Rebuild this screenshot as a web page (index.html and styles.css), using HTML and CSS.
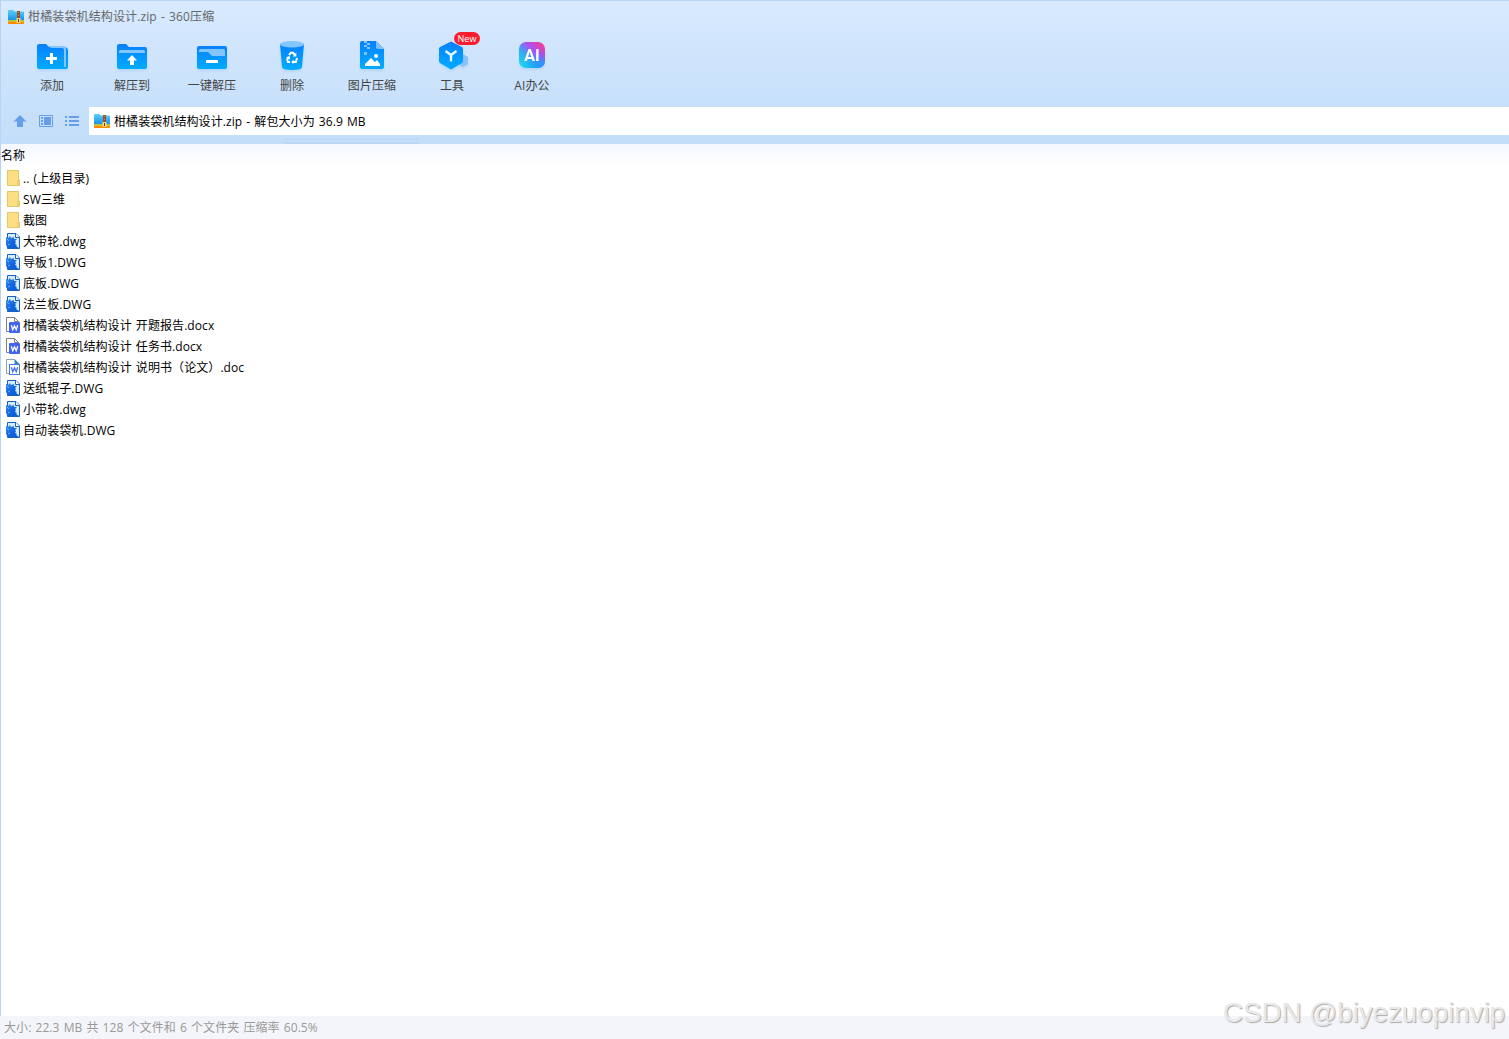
FILE: index.html
```html
<!DOCTYPE html>
<html lang="zh-CN">
<head>
  <meta charset="UTF-8" />
  <title>柑橘装袋机结构设计.zip - 360压缩</title>
  <link rel="stylesheet" href="styles.css">
</head>
<body>

  <svg class="defs" width="0" height="0">
    <defs>
      <linearGradient id="blue" x1="0" y1="0" x2="0" y2="1">
        <stop offset="0" stop-color="#0880ff"/>
        <stop offset="1" stop-color="#00acff"/>
      </linearGradient>
      <linearGradient id="dwg-blue" x1="0" y1="0" x2="1" y2="1">
        <stop offset="0" stop-color="#3d92ea"/>
        <stop offset="0.5" stop-color="#1266df"/>
        <stop offset="1" stop-color="#075cd4"/>
      </linearGradient>
      <linearGradient id="zip-blue" x1="0" y1="0" x2="0" y2="1">
        <stop offset="0" stop-color="#58d0fb"/>
        <stop offset="1" stop-color="#188ce9"/>
      </linearGradient>
      <linearGradient id="ai-bg" x1="0" y1="1" x2="1" y2="0">
        <stop offset="0" stop-color="#12e4e7"/>
        <stop offset="0.35" stop-color="#2fb1f2"/>
        <stop offset="0.65" stop-color="#b44cee"/>
        <stop offset="1" stop-color="#ff3c80"/>
      </linearGradient>
      <radialGradient id="ai-glow" cx="0.85" cy="1" r="0.65">
        <stop offset="0" stop-color="#159bff"/>
        <stop offset="1" stop-color="#159bff" stop-opacity="0"/>
      </radialGradient>
    </defs>
    <symbol id="zip" viewBox="0 0 16 14">
      <path d="M0 1.2Q0 0 1 0H5L7 1.5H15Q16 1.5 16 2.5V11H0Z" fill="url(#zip-blue)"/>
      <path d="M0 10H16V11.5H0Z" fill="#a3cd2b"/>
      <path d="M0 11.5H16V13Q16 14 15 14H1Q0 14 0 13Z" fill="#ff8a00"/>
      <path d="M9 1H12V9H9Z" fill="#a04d20"/>
      <path d="M10 2H11V3H10ZM10 5H11V6H10Z" fill="#c98a52"/>
      <rect x="8.5" y="8" width="4" height="5" fill="#ffd777"/>
      <path d="M10 9H11V12H10Z" fill="#733810"/>
    </symbol>
    <symbol id="folder" viewBox="0 0 14 16">
      <path d="M1.5.5H12.5V10H13.5V15.5H1.5Z" fill="#fbdf83" stroke="#e5c567"/>
      <path d="M12 10V15" stroke="#e5c567"/>
    </symbol>
    <symbol id="dwg" viewBox="0 0 14 16">
      <path d="M1.5.5H10L13.5 4V15.5H1.5Z" fill="#d6ebff" stroke="#1560c0"/>
      <path d="M9.5.5V4.5H13.5" fill="#fff" stroke="#1560c0"/>
      <path d="M0 4 2 5 4 3 5 5 8 4 8 6 11 6 9 8 10 9 9 11 11 12 10 13 13 15H2L0 12Z" fill="url(#dwg-blue)"/>
      <path d="M1 6 3 8M2 12 4 11" stroke="#68b3fa" fill="none"/>
    </symbol>
    <symbol id="docx" viewBox="0 0 14 16">
      <path d="M3 14.5H.5V.5H8.5L12.5 4.5V6M8.5.5V4.5H12.5" fill="#fff" stroke="#7c7f87"/>
      <rect x="3" y="5" width="11" height="11" rx="1" fill="#4066f1"/>
      <path d="M5.3 8.2 6.8 12.7 8.5 8.8 10.2 12.7 11.7 8.2" fill="none" stroke="#fff" stroke-width="1.3"/>
    </symbol>
    <symbol id="doc" viewBox="0 0 14 16">
      <path d="M3 14.5H.5V.5H8.5L12.5 4.5V6" fill="#fff" stroke="#8da4bf"/>
      <path d="M8.5 0 13.5 5H8.5Z" fill="#3586c8"/>
      <rect x="3.5" y="5.5" width="10" height="10" fill="#fff" stroke="#4778ed"/>
      <path d="M5.3 8.2 6.8 12.7 8.5 8.8 10.2 12.7 11.7 8.2" fill="none" stroke="#416fed" stroke-width="1.3"/>
    </symbol>
  </svg>

  <div class="window">
    <div class="header">
      <div class="title-bar">
        <svg class="zip-icon"><use href="#zip"/></svg>
        <span class="title">柑橘装袋机结构设计.zip - 360压缩</span>
      </div>

      <div class="toolbar">
        <div class="tool">
          <svg viewBox="0 0 36 36">
            <path d="M3 8Q3 6 5 6H12L15 9H30Q34 9 34 13V29Q34 31 32 31H5Q3 31 3 29Z" fill="url(#blue)"/>
            <path d="M15 8H29Q32 8 32 11V29H30V12Q30 10 28 10H17Z" fill="#86c5ff"/>
            <path d="M17.5 15V26M12 20.5H23" stroke="#fff" stroke-width="3"/>
          </svg>
          <span>添加</span>
        </div>
        <div class="tool">
          <svg viewBox="0 0 36 36">
            <path d="M3 8Q3 6 5 6H12L15 9H31Q33 9 33 11V29Q33 31 31 31H5Q3 31 3 29Z" fill="url(#blue)"/>
            <path d="M5 15V13.5Q5 12 6.5 12H29.5Q31 12 31 13.5V15Z" fill="#82c5ff"/>
            <path d="M18 17 23 22.5H20V27H16V22.5H13Z" fill="#fff"/>
          </svg>
          <span>解压到</span>
        </div>
        <div class="tool">
          <svg viewBox="0 0 36 36">
            <rect x="3" y="8" width="30" height="23" rx="2" fill="url(#blue)"/>
            <path d="M5 14V12.5Q5 11 6.5 11H29.5Q31 11 31 12.5V18H18L14 14Z" fill="#82c5ff"/>
            <rect x="12" y="22" width="12" height="3" rx=".5" fill="#fff"/>
          </svg>
          <span>一键解压</span>
        </div>
        <div class="tool">
          <svg viewBox="0 0 36 36">
            <path d="M6 6 8 29Q8 32 18 32T28 29L30 6Z" fill="url(#blue)"/>
            <ellipse cx="18" cy="6.2" rx="12" ry="3.2" fill="#84c6ff"/>
            <g fill="none" stroke="#fff" stroke-width="2">
              <path d="M15 17 17 14.8H19L21 17M23 20 22 24H19M16 24H14L13.2 21.5 14.5 19.5"/>
            </g>
            <path d="M22.3 14.5V18.5H18.8ZM19.5 21.8V26.2L17.2 24ZM12 19.3 15.6 18 16.2 21.5Z" fill="#fff"/>
          </svg>
          <span>删除</span>
        </div>
        <div class="tool">
          <svg viewBox="0 0 36 36">
            <path d="M6 5Q6 3 8 3H22L30 11V29Q30 31 28 31H8Q6 31 6 29Z" fill="url(#blue)"/>
            <path d="M22 3 30 11H24Q22 11 22 9Z" fill="#83c4ff"/>
            <path d="M10 3H13V5H10ZM13 5H16V7H13ZM10 7H13V9H10ZM13 9H16V11H13ZM10 14H13V17H10Z" fill="#83c4ff"/>
            <circle cx="22" cy="18" r="2" fill="#fff"/>
            <path d="M11 28V26L17 20 21 24 23 22 26 26V28Z" fill="#fff"/>
          </svg>
          <span>图片压缩</span>
        </div>
        <div class="tool">
          <svg viewBox="0 0 36 36">
            <path d="M24 19 29 16 34 19V26L29 29 24 26Z" fill="#83c4ff"/>
            <path d="M16 4Q17 3 18 4L28 9Q29 10 29 11V23Q29 24 28 25L18 31Q17 31.5 16 31L6 25Q5 24 5 23V11Q5 10 6 9Z" fill="url(#blue)"/>
            <path d="M11.5 13 17 17 22.5 13M17 17V23.5" fill="none" stroke="#e8f8ff" stroke-width="2.4"/>
          </svg>
          <span>工具</span>
          <b class="badge">New</b>
        </div>
        <div class="tool">
          <svg viewBox="0 0 36 36">
            <rect x="5" y="4" width="26" height="26" rx="7" fill="url(#ai-bg)"/>
            <rect x="5" y="4" width="26" height="26" rx="7" fill="url(#ai-glow)"/>
            <text x="18" y="22.7" class="ai-text">AI</text>
          </svg>
          <span>AI办公</span>
        </div>
      </div>

      <div class="address-row">
        <div class="nav">
          <svg viewBox="0 0 16 16"><path d="M8 2 14.5 8.5H11V14H5V8.5H1.5Z" fill="#679eea"/></svg>
          <svg viewBox="0 0 16 16">
            <path d="M1.5 2.5H14.5V13.5H1.5Z" fill="none" stroke="#679eea"/>
            <path d="M6 4H13V12H6ZM3 4H5V6H3ZM3 7H5V9H3ZM3 10H5V12H3Z" fill="#679eea"/>
          </svg>
          <svg viewBox="0 0 16 16"><path d="M1 3H3V5H1ZM1 7H3V9H1ZM1 11H3V13H1ZM5 3H15V5H5ZM5 7H15V9H5ZM5 11H15V13H5Z" fill="#679eea"/></svg>
        </div>
        <div class="address">
          <svg class="zip-icon"><use href="#zip"/></svg>
          <span>柑橘装袋机结构设计.zip - 解包大小为 36.9 MB</span>
        </div>
      </div>
      <div class="header-lines"></div>
    </div>

    <div class="list-header">名称</div>
    <div class="file-list">
      <div class="file"><svg><use href="#folder"/></svg><span>.. (上级目录)</span></div>
      <div class="file"><svg><use href="#folder"/></svg><span>SW三维</span></div>
      <div class="file"><svg><use href="#folder"/></svg><span>截图</span></div>
      <div class="file"><svg><use href="#dwg"/></svg><span>大带轮.dwg</span></div>
      <div class="file"><svg><use href="#dwg"/></svg><span>导板1.DWG</span></div>
      <div class="file"><svg><use href="#dwg"/></svg><span>底板.DWG</span></div>
      <div class="file"><svg><use href="#dwg"/></svg><span>法兰板.DWG</span></div>
      <div class="file"><svg><use href="#docx"/></svg><span>柑橘装袋机结构设计 开题报告.docx</span></div>
      <div class="file"><svg><use href="#docx"/></svg><span>柑橘装袋机结构设计 任务书.docx</span></div>
      <div class="file"><svg><use href="#doc"/></svg><span>柑橘装袋机结构设计 说明书（论文）.doc</span></div>
      <div class="file"><svg><use href="#dwg"/></svg><span>送纸辊子.DWG</span></div>
      <div class="file"><svg><use href="#dwg"/></svg><span>小带轮.dwg</span></div>
      <div class="file"><svg><use href="#dwg"/></svg><span>自动装袋机.DWG</span></div>
    </div>
  </div>

  <div class="status-bar">大小: 22.3 MB 共 128 个文件和 6 个文件夹 压缩率 60.5%</div>
  <div class="watermark">CSDN @biyezuopinvip</div>

</body>
</html>
```
FILE: styles.css
```css
* {
  box-sizing: border-box;
}

body {
  margin: 0;
  height: 100vh;
  display: flex;
  flex-direction: column;
  position: relative;
  overflow: hidden;
  background-color: white;
  color: black;
  font-family: "Open Sans", "Noto Sans CJK SC", sans-serif;
  font-size: 12px;
  line-height: 18px;
  letter-spacing: 0.08px;
  word-spacing: 0.9px;
  white-space: nowrap;
}

svg {
  display: block;
  flex: none;
}

.defs {
  position: absolute;
}

.window {
  flex: 1;
  border-left: 1px solid #b8d4f5;
}

.header {
  height: 144px;
  border-top: 1px solid #b9d6f2;
  background: linear-gradient(#d8eaff, #cee4fc 60px, #c3def9 142px);
}

.title-bar {
  display: flex;
  align-items: center;
  height: 31px;
  padding-left: 7px;
  gap: 4px;
  color: #666;
}

.title {
  letter-spacing: 0.13px;
}

.zip-icon {
  width: 16px;
  height: 14px;
}

.toolbar {
  display: flex;
  height: 75px;
  padding: 6px 0 0 11px;
}

.tool {
  position: relative;
  width: 80px;
  display: flex;
  flex-direction: column;
  align-items: center;
  color: #444;
}

.tool svg {
  width: 36px;
  height: 36px;
  margin-bottom: 3px;
  filter: drop-shadow(0 2px 1px rgba(70, 150, 220, 0.15));
}

.badge {
  position: absolute;
  left: 42px;
  top: -6px;
  width: 26px;
  height: 13px;
  border-radius: 7px;
  background-color: #fa1d30;
  color: white;
  font-size: 9px;
  font-weight: normal;
  line-height: 13px;
  text-align: center;
}

.ai-text {
  fill: white;
  font: bold 16px Roboto, sans-serif;
  text-anchor: middle;
}

.address-row {
  display: flex;
  align-items: center;
  height: 28px;
}

.nav {
  display: flex;
  gap: 10px;
  width: 88px;
  padding-left: 11px;
}

.nav svg {
  width: 16px;
  height: 16px;
}

.address {
  flex: 1;
  display: flex;
  align-items: center;
  height: 28px;
  padding-left: 5px;
  gap: 4px;
  background-color: white;
}

.address span {
  padding-top: 2px;
}

.header-lines {
  width: 135px;
  height: 5px;
  margin: 4px 0 0 283px;
  border-top: 1px solid #b9d6f3;
  border-bottom: 2px solid #b9d6f3;
}

.list-header {
  height: 24px;
  padding-top: 3px;
  background: linear-gradient(#f3f8ff, white);
}

.file {
  display: flex;
  align-items: center;
  height: 21px;
  padding-left: 5px;
  gap: 3px;
}

.file svg {
  width: 14px;
  height: 16px;
  margin-bottom: 1px;
}

.status-bar {
  height: 23px;
  padding: 3px 0 0 4px;
  background-color: #f3f5fa;
  color: #999;
}

.watermark {
  position: absolute;
  right: 4px;
  bottom: 8px;
  color: #e8e8ea;
  font-family: "Liberation Sans", sans-serif;
  font-size: 27.7px;
  line-height: 36px;
  letter-spacing: 0;
  word-spacing: 0;
  text-shadow: 1px 1px 1px #aaa;
}
```
